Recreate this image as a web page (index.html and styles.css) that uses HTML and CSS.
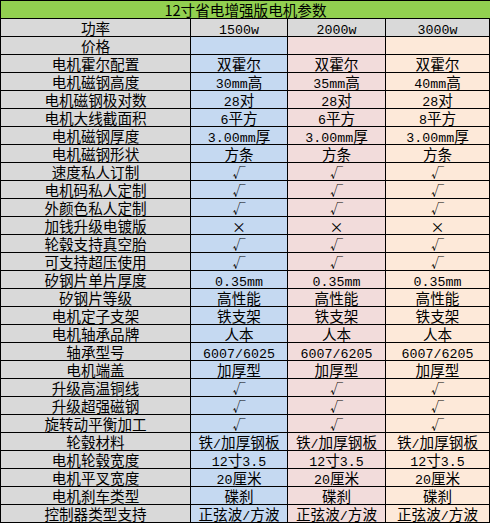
FILE: index.html
```html
<!DOCTYPE html>
<html lang="zh-CN">
<head>
<meta charset="utf-8">
<title>12寸省电增强版电机参数</title>
<link rel="stylesheet" href="styles.css">
</head>
<body>
<div class="sheet">
  <div class="c title">12寸省电增强版电机参数</div>

  <div class="c lab">功率</div><div class="c h"><span class="n">1500w</span></div><div class="c h"><span class="n">2000w</span></div><div class="c h"><span class="n">3000w</span></div>
  <div class="c lab">价格</div><div class="c b"></div><div class="c p"></div><div class="c o"></div>
  <div class="c lab">电机霍尔配置</div><div class="c b">双霍尔</div><div class="c p">双霍尔</div><div class="c o">双霍尔</div>
  <div class="c lab">电机磁钢高度</div><div class="c b"><span class="n">30mm</span>高</div><div class="c p"><span class="n">35mm</span>高</div><div class="c o"><span class="n">40mm</span>高</div>
  <div class="c lab">电机磁钢极对数</div><div class="c b"><span class="n">28</span>对</div><div class="c p"><span class="n">28</span>对</div><div class="c o"><span class="n">28</span>对</div>
  <div class="c lab">电机大线截面积</div><div class="c b"><span class="n">6</span>平方</div><div class="c p"><span class="n">6</span>平方</div><div class="c o"><span class="n">8</span>平方</div>
  <div class="c lab">电机磁钢厚度</div><div class="c b"><span class="n">3.00mm</span>厚</div><div class="c p"><span class="n">3.00mm</span>厚</div><div class="c o"><span class="n">3.00mm</span>厚</div>
  <div class="c lab">电机磁钢形状</div><div class="c b">方条</div><div class="c p">方条</div><div class="c o">方条</div>
  <div class="c lab">速度私人订制</div><div class="c b ck">√</div><div class="c p ck">√</div><div class="c o ck">√</div>
  <div class="c lab">电机码私人定制</div><div class="c b ck">√</div><div class="c p ck">√</div><div class="c o ck">√</div>
  <div class="c lab">外颜色私人定制</div><div class="c b ck">√</div><div class="c p ck">√</div><div class="c o ck">√</div>
  <div class="c lab">加钱升级电镀版</div><div class="c b x">×</div><div class="c p x">×</div><div class="c o x">×</div>
  <div class="c lab">轮毂支持真空胎</div><div class="c b ck">√</div><div class="c p ck">√</div><div class="c o ck">√</div>
  <div class="c lab">可支持超压使用</div><div class="c b ck">√</div><div class="c p ck">√</div><div class="c o ck">√</div>
  <div class="c lab">矽钢片单片厚度</div><div class="c b"><span class="n">0.35mm</span></div><div class="c p"><span class="n">0.35mm</span></div><div class="c o"><span class="n">0.35mm</span></div>
  <div class="c lab">矽钢片等级</div><div class="c b">高性能</div><div class="c p">高性能</div><div class="c o">高性能</div>
  <div class="c lab">电机定子支架</div><div class="c b">铁支架</div><div class="c p">铁支架</div><div class="c o">铁支架</div>
  <div class="c lab">电机轴承品牌</div><div class="c b">人本</div><div class="c p">人本</div><div class="c o">人本</div>
  <div class="c lab">轴承型号</div><div class="c b"><span class="n">6007/6025</span></div><div class="c p"><span class="n">6007/6205</span></div><div class="c o"><span class="n">6007/6205</span></div>
  <div class="c lab">电机端盖</div><div class="c b">加厚型</div><div class="c p">加厚型</div><div class="c o">加厚型</div>
  <div class="c lab">升级高温铜线</div><div class="c b ck">√</div><div class="c p ck">√</div><div class="c o ck">√</div>
  <div class="c lab">升级超强磁钢</div><div class="c b ck">√</div><div class="c p ck">√</div><div class="c o ck">√</div>
  <div class="c lab">旋转动平衡加工</div><div class="c b ck">√</div><div class="c p ck">√</div><div class="c o ck">√</div>
  <div class="c lab">轮毂材料</div><div class="c b">铁<span class="n">/</span>加厚钢板</div><div class="c p">铁<span class="n">/</span>加厚钢板</div><div class="c o">铁<span class="n">/</span>加厚钢板</div>
  <div class="c lab">电机轮毂宽度</div><div class="c b"><span class="n">12</span>寸<span class="n">3.5</span></div><div class="c p"><span class="n">12</span>寸<span class="n">3.5</span></div><div class="c o"><span class="n">12</span>寸<span class="n">3.5</span></div>
  <div class="c lab">电机平叉宽度</div><div class="c b"><span class="n">20</span>厘米</div><div class="c p"><span class="n">20</span>厘米</div><div class="c o"><span class="n">20</span>厘米</div>
  <div class="c lab">电机刹车类型</div><div class="c b">碟刹</div><div class="c p">碟刹</div><div class="c o">碟刹</div>
  <div class="c lab">控制器类型支持</div><div class="c b">正弦波<span class="n">/</span>方波</div><div class="c p">正弦波<span class="n">/</span>方波</div><div class="c o">正弦波<span class="n">/</span>方波</div>
</div>
</body>
</html>
```
FILE: styles.css
```css
html, body {
  margin: 0;
  padding: 0;
  background: #ffffff;
}

.sheet {
  box-sizing: border-box;
  width: 490px;
  display: grid;
  grid-template-columns: 189px 96px 97px 103px;
  grid-auto-rows: 17px;
  gap: 1px;
  padding: 1px;
  background: #000000;
  font-family: "Noto Sans CJK SC", "Noto Sans", sans-serif;
  font-size: 14.6px;
  color: #000000;
}

.c {
  box-sizing: border-box;
  padding-top: 1px;
  line-height: 16px;
  text-align: center;
  white-space: nowrap;
}

.title {
  grid-column: 1 / 5;
  background: #92d050;
  margin-right: -1px;
}

.lab,
.h {
  background: #d9d9d9;
}

.b {
  background: #c5d9f1;
}

.p {
  background: #f2dcdb;
}

.o {
  background: #fde9d9;
}

.n {
  font-family: "Liberation Mono", "DejaVu Sans Mono", monospace;
  font-size: 13.3px;
}

.ck {
  font-size: 13px;
}

.x {
  font-size: 14px;
}
```
